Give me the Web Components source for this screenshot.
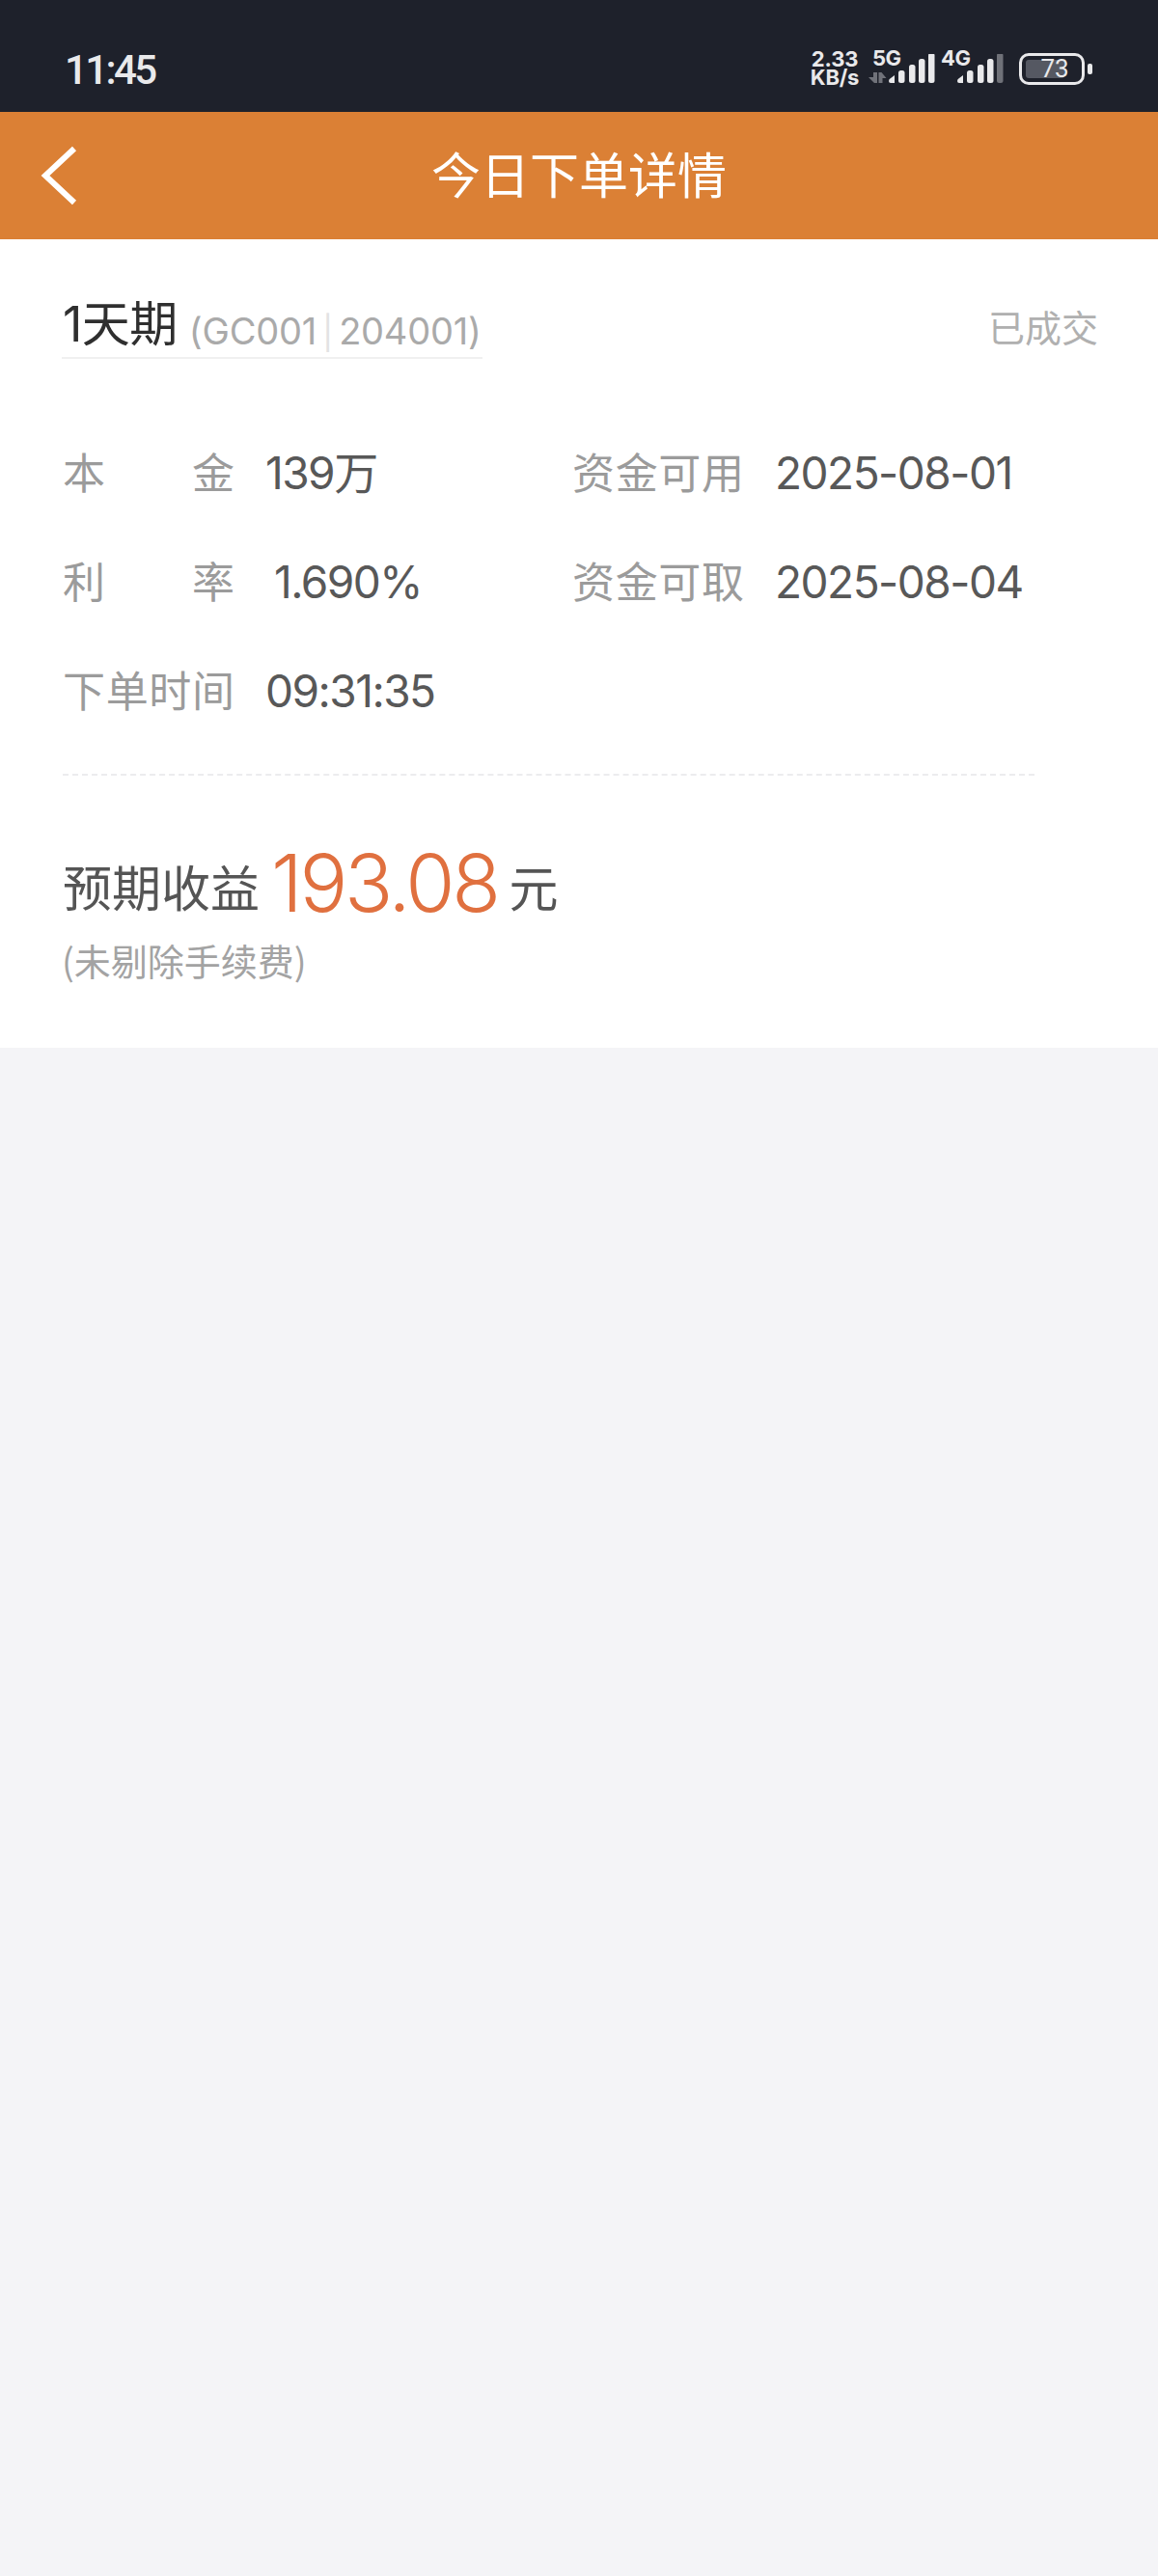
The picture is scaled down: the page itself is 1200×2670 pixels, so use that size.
<!doctype html>
<html lang="zh">
<head>
<meta charset="utf-8">
<title>今日下单详情</title>
<style>
  html, body { margin: 0; height: 100%; }
  body {
    background: #f4f4f7;
    font-family: Inter, "Noto Sans CJK SC", sans-serif;
  }
  order-page { min-height: 2670px; }
</style>
</head>
<body>
<order-page>
  <status-bar time="11:45" speed="2.33" battery="73"></status-bar>
  <app-bar>今日下单详情</app-bar>
  <order-card>
    <order-heading slot="heading" term="1天期" codes="GC001,204001" state="已成交"></order-heading>
    <info-row label="本金" value="139万" slot="info"></info-row>
    <info-row label="资金可用" value="2025-08-01" slot="info"></info-row>
    <info-row label="利率" value="1.690%" inset slot="info"></info-row>
    <info-row label="资金可取" value="2025-08-04" slot="info"></info-row>
    <info-row label="下单时间" value="09:31:35" slot="info"></info-row>
    <income-line slot="income" amount="193.08" note="(未剔除手续费)"></income-line>
  </order-card>
</order-page>

<script>
class OrderPage extends HTMLElement {
  constructor() {
    super();
    this.attachShadow({ mode: "open" });
    this.shadowRoot.innerHTML = `
      <style>
        :host { display: flex; flex-direction: column; width: 100%; }
      </style>
      <slot></slot>
    `;
  }
}

class NetSignal extends HTMLElement {
  constructor() {
    super();
    this.attachShadow({ mode: "open" });
    // up/down traffic arrows, only the 5G slot has them
    const arrows = this.hasAttribute("arrows")
      ? `<path d="M5 0h4v11H6L0 5h5zM10.500 0h3l5 6h-4v5h-4z" fill="#70727a"/>`
      : "";
    const dim = this.hasAttribute("dim");
    this.shadowRoot.innerHTML = `
      <style>
        :host { display: block; position: relative; width: 69px; height: 36px; }
        .label {
          position: absolute; left: 4px; top: -3px;
          font: 700 22px/21px Inter, sans-serif;
          color: #e9e9eb;
          letter-spacing: -0.5px;
        }
        svg { position: absolute; left: 0; top: 3px; }
      </style>
      <span class="label">${this.getAttribute("label")}</span>
      <svg width="69" height="33" viewBox="0 0 69 33">
        <g transform="translate(0 19)">${arrows}</g>
        <path d="M21 28q0-2 2-3l4-3v8h-4q-2 0-2-2z" fill="#e9e9eb"/>
        <rect x="31" y="17" width="6.500" height="13" rx="2.500" fill="#e9e9eb"/>
        <rect x="42" y="11" width="6.500" height="19" rx="2.500" fill="#e9e9eb"/>
        <rect x="52" y="5" width="6.500" height="25" rx="2.500" fill="#e9e9eb"/>
        <rect x="62" y="-1" width="6.500" height="31" rx="2.500" fill="${dim ? "#6f7178" : "#e9e9eb"}"/>
      </svg>
    `;
  }
}

class StatusBar extends HTMLElement {
  constructor() {
    super();
    this.attachShadow({ mode: "open" });
    this.shadowRoot.innerHTML = `
      <style>
        :host {
          display: flex;
          align-items: center;
          box-sizing: border-box;
          height: 116px;
          padding: 26px 68px 0 67px;
          background: #1e212b;
          color: #e9e9eb;
        }
        .time { font: 500 42px/1 Roboto, sans-serif; flex: 1; letter-spacing: -2.600px; margin-top: 3px; }
        .icons { display: flex; align-items: center; }
        .speed {
          font: 700 22px/19px Inter, sans-serif;
          text-align: center;
          width: 52px;
          margin-right: 9px;
          letter-spacing: -0.2px;
        }
        net-signal + net-signal { margin-left: 2px; }
        .battery {
          position: relative;
          box-sizing: border-box;
          width: 68px;
          height: 33px;
          margin-left: 16px;
          padding: 4px;
          border: 3px solid #e9e9eb;
          border-radius: 10px;
        }
        .fill { display: block; width: 40px; height: 19px; background: #555862; border-radius: 3px; }
        .level {
          position: absolute; left: 0; right: 0; top: 0; bottom: 0;
          padding-left: 6px;
          display: flex; align-items: center; justify-content: center;
          font: 400 26px/1 Roboto, sans-serif;
        }
        .nub { width: 5px; height: 11px; margin-left: 3px; background: #e9e9eb; border-radius: 2px; }
      </style>
      <span class="time">${this.getAttribute("time")}</span>
      <div class="icons">
        <div class="speed">${this.getAttribute("speed")}<br>KB/s</div>
        <net-signal label="5G" arrows></net-signal>
        <net-signal label="4G" dim></net-signal>
        <div class="battery"><span class="fill"></span><span class="level">${this.getAttribute("battery")}</span></div>
        <div class="nub"></div>
      </div>
    `;
  }
}

class AppBar extends HTMLElement {
  constructor() {
    super();
    this.attachShadow({ mode: "open" });
    this.shadowRoot.innerHTML = `
      <style>
        :host {
          display: flex;
          align-items: center;
          justify-content: center;
          position: relative;
          box-sizing: border-box;
          height: 132px;
          padding-bottom: 6px;
          background: #db8035;
          color: #fff;
          font: 400 51px/1 "Noto Sans CJK SC", sans-serif;
        }
        svg { position: absolute; left: 40px; top: 35px; }
      </style>
      <svg width="42" height="62" viewBox="0 0 42 62">
        <path d="M37 3 L7 31 L37 59" fill="none" stroke="#fff" stroke-width="6"/>
      </svg>
      <slot></slot>
    `;
  }
}

class OrderCard extends HTMLElement {
  constructor() {
    super();
    this.attachShadow({ mode: "open" });
    this.shadowRoot.innerHTML = `
      <style>
        :host {
          display: block;
          box-sizing: border-box;
          height: 838px;
          padding: 58px 62px 0 65px;
          background: #fff;
        }
        .grid {
          display: grid;
          grid-template-columns: 528px 1fr;
          grid-auto-rows: 113px;
          margin-top: 59px;
          width: 1007px;
          border-bottom: 2px dashed #ececee;
          height: 373px;
          box-sizing: border-box;
        }
      </style>
      <slot name="heading"></slot>
      <div class="grid"><slot name="info"></slot></div>
      <slot name="income"></slot>
    `;
  }
}

class OrderHeading extends HTMLElement {
  constructor() {
    super();
    this.attachShadow({ mode: "open" });
    const [a, b] = this.getAttribute("codes").split(",");
    this.shadowRoot.innerHTML = `
      <style>
        :host { display: flex; justify-content: space-between; align-items: flex-start; }
        .left {
          height: 66px;
          width: 436px;
          border-bottom: 2px solid #f0f0f0;
          margin-left: -1px;
          padding-left: 1px;
          box-sizing: border-box;
          white-space: nowrap;
        }
        .term { font: 400 50px/60px Inter, "Noto Sans CJK SC", sans-serif; color: #2f2f2f; letter-spacing: -0.500px; }
        .codes {
          font: 400 38px/60px Inter, sans-serif;
          color: #aaa;
          margin-left: 12px;
          letter-spacing: -0.200px;
          vertical-align: -3px;
        }
        .sep { color: #e3e3e3; font-size: 34px; margin: 0 6px; }
        .state { font: 400 38px/54px "Noto Sans CJK SC", sans-serif; color: #b0b0b0; margin-top: 5px; }
      </style>
      <div class="left"><span class="term">${this.getAttribute("term")}</span><span class="codes">(${a}<span class="sep">|</span>${b})</span></div>
      <span class="state">${this.getAttribute("state")}</span>
    `;
  }
}

class InfoRow extends HTMLElement {
  constructor() {
    super();
    this.attachShadow({ mode: "open" });
    const label = this.getAttribute("label");
    const chars = [...label].map((c) => `<span>${c}</span>`).join("");
    this.shadowRoot.innerHTML = `
      <style>
        :host { display: flex; align-items: center; height: 113px; }
        .label {
          display: flex;
          justify-content: space-between;
          width: 178px;
          color: #9b9b9b;
          font: 400 44px/1 "Noto Sans CJK SC", sans-serif;
        }
        .value {
          margin-left: ${this.hasAttribute("inset") ? 41 : 32}px;
          margin-top: 4px;
          color: #585858;
          font: 400 46px/1 Inter, "Noto Sans CJK SC", sans-serif;
          white-space: nowrap;
          letter-spacing: -1.500px;
        }
      </style>
      <span class="label">${chars}</span>
      <span class="value">${this.getAttribute("value")}</span>
    `;
  }
}

class IncomeLine extends HTMLElement {
  constructor() {
    super();
    this.attachShadow({ mode: "open" });
    this.shadowRoot.innerHTML = `
      <style>
        :host { display: block; padding-top: 70px; }
        .main { height: 104px; line-height: 104px; color: #555; white-space: nowrap; }
        .cn { font: 400 51px/1 "Noto Sans CJK SC", sans-serif; }
        .num {
          font: 300 83px/1 Inter, sans-serif;
          color: #e0703f;
          margin: 0 12px;
          letter-spacing: -3.300px;
          vertical-align: -5px;
        }
        .note {
          color: #a3a3a3;
          font: 400 38px/1 "Noto Sans CJK SC", sans-serif;
          margin: -2px 0 0 -1px;
        }
      </style>
      <div class="main"><span class="cn">预期收益</span><span class="num">${this.getAttribute("amount")}</span><span class="cn">元</span></div>
      <div class="note">${this.getAttribute("note")}</div>
    `;
  }
}

customElements.define("order-page", OrderPage);
customElements.define("net-signal", NetSignal);
customElements.define("status-bar", StatusBar);
customElements.define("app-bar", AppBar);
customElements.define("order-card", OrderCard);
customElements.define("order-heading", OrderHeading);
customElements.define("info-row", InfoRow);
customElements.define("income-line", IncomeLine);
</script>
</body>
</html>
